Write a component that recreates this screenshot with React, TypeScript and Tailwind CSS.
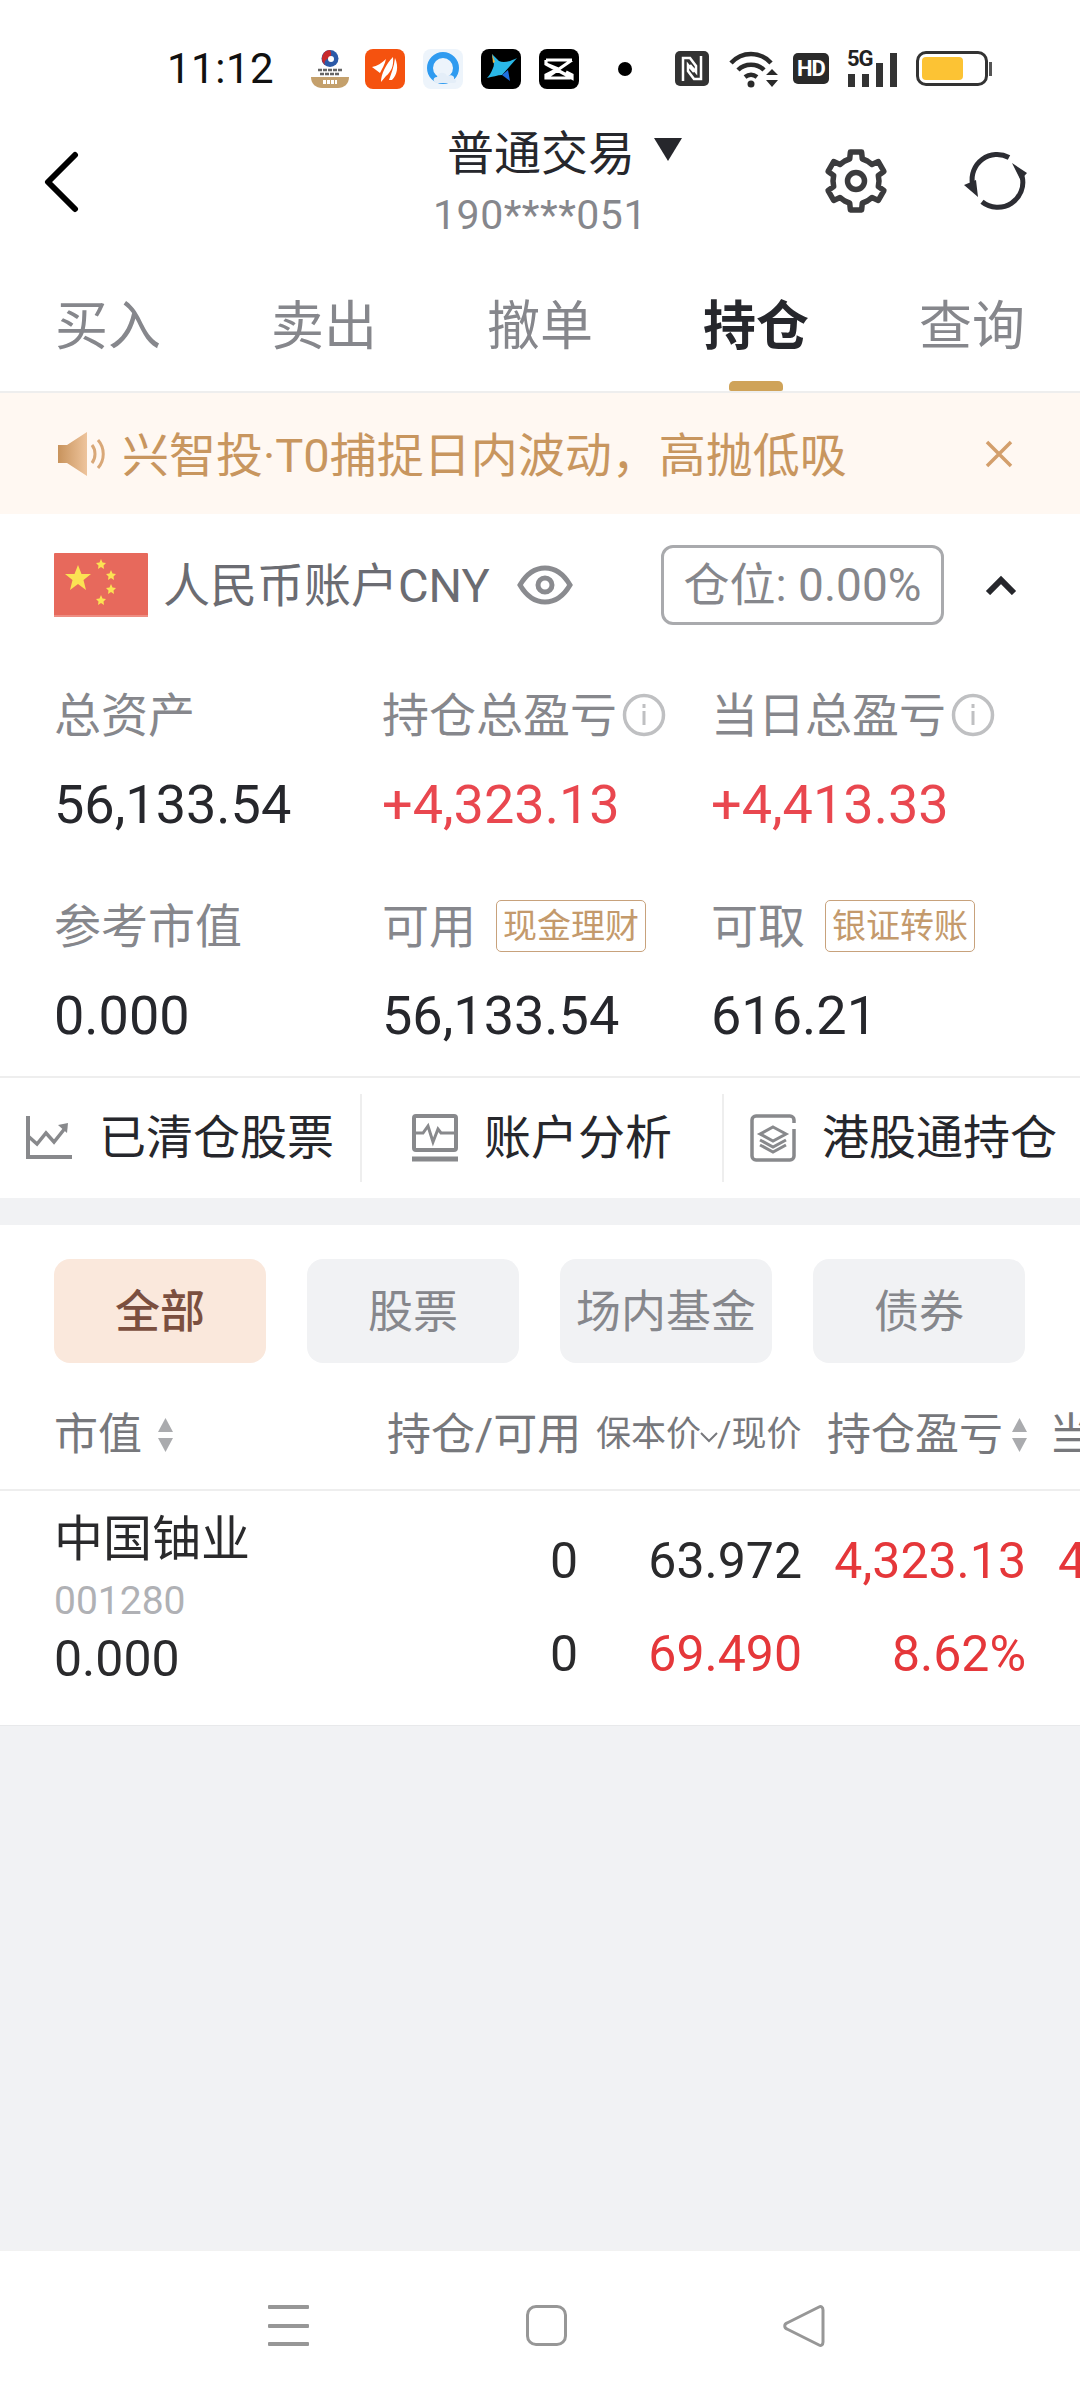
const GEAR_POINTS = Array.from({ length: 6 }, (_, i) => {
  const a = (i * 60 - 90) * (Math.PI / 180)
  const at = (r: number, d: number) => {
    const t = a + (d * Math.PI) / 180
    return `${(32 + r * Math.cos(t)).toFixed(1)},${(32 + r * Math.sin(t)).toFixed(1)}`
  }
  return [at(23, -30), at(23, -16), at(29.5, -11), at(29.5, 11), at(23, 16)].join(' ')
}).join(' ')

function XingyeLogo() {
  return (
    <svg width="38" height="40" viewBox="0 0 38 40" className="shrink-0">
      <circle cx="19" cy="9.500" r="8.500" fill="#2c5aa8" />
      <path d="M19 1a8.500 8.500 0 0 0-5 15c-2-5 3-6 5-8 2-2 1-5 0-7z" fill="#c8282c" />
      <circle cx="20" cy="10" r="3" fill="#fff" />
      <path d="M7 21h24M9 25h20" stroke="#666" strokeWidth="2.500" strokeDasharray="4 1" />
      <path d="M0 28h38c0 7-5 11-11 11H11C5 39 0 35 0 28z" fill="#c4a06c" />
      <path d="M12 33h14" stroke="#fff" strokeWidth="4" strokeDasharray="3 1" />
    </svg>
  )
}

function OrangeLogo() {
  return (
    <svg width="40" height="40" viewBox="0 0 40 40" className="shrink-0">
      <rect width="40" height="40" rx="8" fill="#f5520f" />
      <path d="M7 18c5-1 10-4 14-8-1 5-4 10-6 14z" fill="#fff" />
      <path d="M16 33c0-8 5-18 12-25 1 9-2 15-7 19z" fill="#fff" />
      <path d="M24 31c2-6 5-13 6-22 4 9 2 17-3 22z" fill="#fff" />
    </svg>
  )
}

function BrowserLogo() {
  return (
    <svg width="40" height="40" viewBox="0 0 40 40" className="shrink-0">
      <rect width="40" height="40" rx="8" fill="#edf4fb" />
      <circle cx="20" cy="19" r="13" fill="none" stroke="#2f9bf0" strokeWidth="6" />
      <path d="M14 34c-4 0-5-6 0-6 1-5 8-6 10-1 4-2 8 0 7 3 3 0 3 4 0 4z" fill="#e4eef8" />
    </svg>
  )
}

function ArrowLogo() {
  return (
    <svg width="40" height="40" viewBox="0 0 40 40" className="shrink-0">
      <rect width="40" height="40" rx="8" fill="#000" />
      <path d="M11 5c1 6 3 10 1 14-2 5-4 8-6 10 5-1 11-3 15-3l15-17c-8 4-14 5-18 3z" fill="#2ab8e8" />
      <path d="M11 5l3 8-2 1z" fill="#f0b43c" />
      <path d="M21 26l8 6-2-11z" fill="#1f6fe0" />
    </svg>
  )
}

function CapcutLogo() {
  return (
    <svg width="40" height="40" viewBox="0 0 40 40" className="shrink-0">
      <rect width="40" height="40" rx="8" fill="#000" />
      <path d="M7 11h26M7 11v4l12 5-12 6v3h21c3 0 5-1 5-1M33 11l-26 18M7 15l26 14v-3l-6-3" stroke="#fff" strokeWidth="3.2" fill="none" />
    </svg>
  )
}

function NfcIcon() {
  return (
    <svg width="34" height="35" viewBox="0 0 34 35" className="shrink-0">
      <rect width="34" height="35" rx="5" fill="#333" />
      <path d="M8 30V7h7l6 8v6l-6-7" fill="none" stroke="#fff" strokeWidth="2.500" />
      <path d="M26 5v23h-7l-6-8v-6l6 7" fill="none" stroke="#fff" strokeWidth="2.500" />
    </svg>
  )
}

function WifiIcon() {
  return (
    <svg width="50" height="40" viewBox="0 0 50 40" className="shrink-0" fill="none" stroke="#2a2a2a" strokeWidth="4.500">
      <path d="M2 14c11-12 29-12 40 0" />
      <path d="M9 21c7-7 19-7 26 0" />
      <path d="M16 28c4-3 8-3 12 0" />
      <circle cx="22" cy="35" r="3.500" fill="#2a2a2a" stroke="none" />
      <path d="M37 26h12l-6-6zM37 31h12l-6 7z" fill="#2a2a2a" stroke="none" />
    </svg>
  )
}

function BatteryIcon() {
  return (
    <div className="flex items-center shrink-0">
      <div className="w-[72px] h-[35px] rounded-[10px] border-[3px] border-[#333] p-[3px] bg-white">
        <div className="w-[41px] h-full rounded-[4px] bg-[#fcc334]" />
      </div>
      <div className="w-[3px] h-[14px] ml-[1px] bg-[#555]" />
    </div>
  )
}

function StatusBar() {
  return (
    <div className="h-[110px] shrink-0 flex items-center pt-[27px] pl-[167px] text-[#111]">
      <span className="w-[144px] text-[42px] leading-none tracking-[0.5px] shrink-0">11:12</span>
      <XingyeLogo />
      <div className="ml-[16px] flex gap-[18px]">
        <OrangeLogo />
        <BrowserLogo />
        <ArrowLogo />
        <CapcutLogo />
      </div>
      <div className="ml-[39px] w-[14px] h-[14px] rounded-full bg-black shrink-0" />
      <div className="ml-[43px]"><NfcIcon /></div>
      <div className="ml-[20px]"><WifiIcon /></div>
      <div className="ml-[14px] w-[36px] h-[31px] rounded-[5px] bg-[#2a2a2a] text-white text-[22px] font-bold leading-[31px] text-center tracking-[-1px] shrink-0">HD</div>
      <div className="ml-[18px] w-[52px] h-[36px] relative shrink-0">
        <span className="absolute left-0 -top-[3px] text-[22px] font-bold leading-[22px] tracking-[-1px] text-[#222]">5G</span>
        <div className="absolute inset-0 flex items-end gap-[7px] pl-[1px]">
          <div className="w-[7px] h-[13px] bg-[#333]" />
          <div className="w-[7px] h-[13px] bg-[#333]" />
          <div className="w-[7px] h-[24px] bg-[#333]" />
          <div className="w-[7px] h-[34px] bg-[#333]" />
        </div>
      </div>
      <div className="ml-[17px]"><BatteryIcon /></div>
    </div>
  )
}

function Header() {
  return (
    <div className="h-[140px] shrink-0 relative flex flex-col items-center">
      <svg width="36" height="62" viewBox="0 0 36 62" className="absolute left-[43px] top-[41px]" fill="none" stroke="#000" strokeWidth="6" strokeLinecap="round" strokeLinejoin="round">
        <path d="M32 4L5 31l27 27" />
      </svg>
      <div className="h-[62px] mt-[12px] flex items-center pl-[50px]">
        <span className="text-[47px] text-[#26272c] leading-none">普通交易</span>
        <svg width="30" height="24" viewBox="0 0 30 24" className="ml-[18px] mb-[8px]">
          <path d="M1 1h28L15 24z" fill="#26272c" />
        </svg>
      </div>
      <div className="text-[41px] leading-[48px] mt-[7px] text-[#86878c] tracking-[0.5px]">190****051</div>
      <svg width="64" height="64" viewBox="0 0 64 64" className="absolute left-[824px] top-[39px]" fill="none" stroke="#3b3b3d" strokeWidth="5.500" strokeLinejoin="round">
        <polygon points={GEAR_POINTS} />
        <circle cx="32" cy="32" r="8.500" />
      </svg>
      <svg width="70" height="60" viewBox="0 0 70 60" className="absolute left-[960px] top-[41px]" fill="none" stroke="#2c2d33" strokeWidth="5">
        <path d="M49 6.500A25 25 0 0 0 12.500 33" />
        <path d="M22 50.700A25 25 0 0 0 62 25" />
        <path d="M4 34l12-5 2 17zM52 12l15 10-6.500 7z" fill="#2c2d33" stroke="none" />
      </svg>
    </div>
  )
}

const TABS = ['买入', '卖出', '撤单', '持仓', '查询']

function Tabs() {
  return (
    <div className="h-[143px] shrink-0 flex border-b-2 border-[#eeeeee]">
      {TABS.map((tab) => (
        <div key={tab} className="flex-1 flex flex-col items-center relative">
          <span className={`mt-[42px] text-[53px] leading-[70px] ${tab === '持仓' ? 'text-[#26272c] font-bold' : 'text-[#86878c]'}`}>
            {tab}
          </span>
          {tab === '持仓' && <div className="absolute bottom-0 w-[54px] h-[10px] rounded-t-[5px] rounded-b-[2px] bg-[#cfa359]" />}
        </div>
      ))}
    </div>
  )
}

function Banner() {
  return (
    <div className="h-[121px] shrink-0 bg-[#fff8f2] flex items-center pl-[57px] pr-[67px]">
      <svg width="50" height="46" viewBox="0 0 50 46" className="shrink-0">
        <defs>
          <linearGradient id="spk" x1="0" x2="1">
            <stop offset="0" stopColor="#c8935c" />
            <stop offset="1" stopColor="#eec49c" />
          </linearGradient>
        </defs>
        <path d="M1 14h9L30 1v44L10 32H1z" fill="url(#spk)" />
        <path d="M35 14c4 5 4 13 0 18M41 9c7 8 7 20 0 28" fill="none" stroke="#d9a878" strokeWidth="3" />
      </svg>
      <span className="ml-[15px] mt-[3px] text-[47px] leading-none text-[#c8965f] whitespace-nowrap">兴智投·T0捕捉日内波动，高抛低吸</span>
      <svg width="28" height="28" viewBox="0 0 28 28" className="ml-auto shrink-0" fill="none" stroke="#d39f6c" strokeWidth="3.500">
        <path d="M2 2l24 24M26 2L2 26" />
      </svg>
    </div>
  )
}

function FlagIcon() {
  const small = [[47, 11], [57, 22], [57, 36], [47, 47]]
  return (
    <svg width="94" height="64" viewBox="0 0 94 64" className="shrink-0">
      <rect width="94" height="64" rx="1" fill="#e7695c" />
      <rect y="62" width="94" height="2" fill="#ee8d82" />
      <polygon points="24,12 27.500,21 37,21 29.500,27 32,37 24,31 16,37 18.500,27 11,21 20.500,21" fill="#fbe253" />
      {small.map(([x, y]) => (
        <polygon key={`${x}-${y}`} points={`${x},${y - 5} ${x + 1.5},${y - 1.500} ${x + 5},${y - 1} ${x + 2.500},${y + 1.500} ${x + 3},${y + 5} ${x},${y + 3} ${x - 3},${y + 5} ${x - 2.500},${y + 1.500} ${x - 5},${y - 1} ${x - 1.500},${y - 1.500}`} fill="#fbe253" />
      ))}
    </svg>
  )
}

function AccountRow() {
  return (
    <div className="h-[142px] shrink-0 flex items-center pl-[54px]">
      <FlagIcon />
      <span className="ml-[15px] w-[342px] text-[47px] leading-none text-[#6b6c72] whitespace-nowrap">人民币账户CNY</span>
      <svg width="56" height="40" viewBox="0 0 56 40" className="ml-[12px] shrink-0" fill="none" stroke="#8a8b8f" strokeWidth="5">
        <path d="M3 20C10 8 19 3 28 3s18 5 25 17c-7 12-16 17-25 17S10 32 3 20z" />
        <circle cx="28" cy="20" r="7" />
      </svg>
      <div className="ml-[88px] w-[283px] h-[80px] shrink-0 rounded-[12px] border-[3px] border-[#a9aaad] flex items-center justify-center text-[46px] text-[#86878c] whitespace-nowrap">
        仓位: 0.00%
      </div>
      <svg width="32" height="20" viewBox="0 0 32 20" className="ml-[41px] shrink-0" fill="none" stroke="#26272c" strokeWidth="6">
        <path d="M3 18L16 5l13 13" />
      </svg>
    </div>
  )
}

function InfoIcon() {
  return (
    <svg width="44" height="44" viewBox="0 0 44 44" className="ml-[5px] shrink-0" fill="none" stroke="#bfc0c2" strokeWidth="3.500">
      <circle cx="22" cy="22" r="19.500" />
      <path d="M22 18v14M22 11v4" strokeWidth="3" />
    </svg>
  )
}

function Chip({ label }: { label: string }) {
  return (
    <span className="ml-[20px] w-[150px] h-[52px] rounded-[5px] border border-[#c8a27c] flex items-center justify-center text-[34px] text-[#c49a6c] whitespace-nowrap">
      {label}
    </span>
  )
}

function Stat({ label, value, red, info, chip }: { label: string; value: string; red?: boolean; info?: boolean; chip?: string }) {
  return (
    <div>
      <div className="h-[60px] flex items-center text-[47px] leading-none text-[#86878c] whitespace-nowrap">
        {label}
        {info && <InfoIcon />}
        {chip && <Chip label={chip} />}
      </div>
      <div className={`mt-[30px] h-[60px] flex items-center text-[54px] leading-none whitespace-nowrap ${red ? 'text-[#e9474f]' : 'text-[#26272c]'}`}>
        {value}
      </div>
    </div>
  )
}

function Stats() {
  return (
    <div className="h-[422px] shrink-0 pt-[29px] pl-[54px] border-b-2 border-[#eeeeee] grid grid-cols-[328px_329px_1fr] grid-rows-[211px_1fr]">
      <Stat label="总资产" value="56,133.54" />
      <Stat label="持仓总盈亏" value="+4,323.13" red info />
      <Stat label="当日总盈亏" value="+4,413.33" red info />
      <Stat label="参考市值" value="0.000" />
      <Stat label="可用" value="56,133.54" chip="现金理财" />
      <Stat label="可取" value="616.21" chip="银证转账" />
    </div>
  )
}

function ActionRow() {
  return (
    <div className="h-[120px] shrink-0 flex items-center text-[47px] text-[#26272c] whitespace-nowrap">
      <div className="w-[362px] h-[88px] flex items-center pl-[26px] border-r-2 border-[#eeeeee]">
        <svg width="46" height="46" viewBox="0 0 46 46" fill="none" stroke="#88898c" strokeWidth="3.500" className="shrink-0">
          <path d="M2 1v41h44" strokeWidth="4" />
          <path d="M2 21l9 8 9-11 8 9 12-15" />
          <path d="M32 10l10-2-1 10z" fill="#88898c" stroke="none" />
        </svg>
        <span className="ml-[27px]">已清仓股票</span>
      </div>
      <div className="w-[362px] h-[88px] flex items-center pl-[50px] border-r-2 border-[#eeeeee]">
        <svg width="46" height="48" viewBox="0 0 46 48" fill="none" stroke="#88898c" strokeWidth="4" className="shrink-0">
          <rect x="2" y="2" width="42" height="34" rx="2" />
          <path d="M2 19h9l5-7 5 16 5-13 3 4h14" strokeWidth="3" />
          <path d="M0 45h46" strokeWidth="5" />
        </svg>
        <span className="ml-[26px]">账户分析</span>
      </div>
      <div className="flex-1 h-[88px] flex items-center pl-[26px]">
        <svg width="46" height="48" viewBox="0 0 46 48" fill="none" stroke="#88898c" strokeWidth="3.500" className="shrink-0">
          <path d="M44 9V6a4 4 0 0 0-4-4H6a4 4 0 0 0-4 4v36a4 4 0 0 0 4 4h34a4 4 0 0 0 4-4V15" />
          <path d="M23 13l13 7-13 7-13-7z" strokeWidth="3" />
          <path d="M10 26l13 7 13-7M10 31l13 7 13-7" strokeWidth="3" />
        </svg>
        <span className="ml-[26px]">港股通持仓</span>
      </div>
    </div>
  )
}

const FILTERS = ['全部', '股票', '场内基金', '债券']

function Filters() {
  return (
    <div className="pt-[34px] px-[54px] flex gap-[41px]">
      {FILTERS.map((f, i) => (
        <div
          key={f}
          className={`w-[212px] h-[104px] pt-[4px] rounded-[16px] flex items-center justify-center text-[45px] ${i === 0 ? 'bg-[#fae8dc] text-[#7b4f3f] font-medium' : 'bg-[#f1f2f4] text-[#86878c]'}`}
        >
          {f}
        </div>
      ))}
    </div>
  )
}

function SortArrows() {
  return (
    <svg width="17" height="36" viewBox="0 0 17 36" className="shrink-0">
      <path d="M8.500 1L16 15H1z" fill="#aaabae" />
      <path d="M8.500 35L16 21H1z" fill="#aaabae" />
    </svg>
  )
}

function TableHeader() {
  return (
    <div className="h-[128px] shrink-0 pt-[18px] flex items-center text-[44px] text-[#77787c] whitespace-nowrap border-b-2 border-[#eeeeee] overflow-hidden">
      <div className="w-[387px] shrink-0 pl-[54px] flex items-center gap-[15px]">
        市值
        <SortArrows />
      </div>
      <div className="w-[209px] shrink-0">持仓/可用</div>
      <div className="w-[231px] shrink-0 flex items-center text-[35px]">
        保本价
        <svg width="18" height="12" viewBox="0 0 18 12" className="-mx-[1px] mt-[4px] shrink-0" fill="none" stroke="#77787c" strokeWidth="2">
          <path d="M1 2l8 8 8-8" />
        </svg>
        /现价
      </div>
      <div className="w-[222px] shrink-0 flex items-center gap-[8px]">
        持仓盈亏
        <SortArrows />
      </div>
      <div className="shrink-0">当日盈亏</div>
    </div>
  )
}

function TableRow() {
  const red = 'text-[#e5373a]'
  return (
    <div className="h-[235px] shrink-0 flex whitespace-nowrap text-[50px] text-[#2a2a2c] border-b border-[#e8e9eb] overflow-hidden">
      <div className="w-[388px] shrink-0 pl-[54px] pt-[18px]">
        <div className="h-[62px] leading-[62px] text-[49px]">中国铀业</div>
        <div className="h-[50px] leading-[50px] text-[39px] text-[#b0b1b5] mt-[5px]">001280</div>
        <div className="h-[60px] leading-[60px] mt-[3px]">0.000</div>
      </div>
      <div className="flex shrink-0 flex-col pt-[40px] gap-[33px]">
        <div className="flex leading-[60px]">
          <div className="w-[190px] text-right">0</div>
          <div className="w-[224px] text-right">63.972</div>
          <div className={`w-[224px] text-right ${red}`}>4,323.13</div>
          <div className={`ml-[32px] ${red}`}>4,413.33</div>
        </div>
        <div className="flex leading-[60px]">
          <div className="w-[190px] text-right">0</div>
          <div className={`w-[224px] text-right ${red}`}>69.490</div>
          <div className={`w-[224px] text-right ${red}`}>8.62%</div>
        </div>
      </div>
    </div>
  )
}

function NavBar() {
  return (
    <div className="h-[150px] shrink-0 bg-white relative border-t border-[#f2f2f2] flex items-start pt-[54px] pl-[268px]">
      <div className="w-[41px] h-[41px] flex flex-col justify-between shrink-0">
        <div className="h-[4px] bg-[#979797] rounded-[1px]" />
        <div className="h-[4px] bg-[#979797] rounded-[1px]" />
        <div className="h-[4px] bg-[#979797] rounded-[1px]" />
      </div>
      <div className="ml-[217px] w-[41px] h-[41px] rounded-[10px] border-[3px] border-[#979797] shrink-0" />
      <svg width="42" height="42" viewBox="0 0 42 42" className="ml-[216px] shrink-0" fill="none" stroke="#979797" strokeWidth="3" strokeLinejoin="round">
        <path d="M36 2c2-1 4 0 4 3v32c0 3-2 4-4 3L4 24c-3-1-3-5 0-6z" />
      </svg>
    </div>
  )
}

export default function App() {
  return (
    <div className="w-[1080px] h-[2400px] overflow-hidden flex flex-col bg-white [font-family:Roboto,'Noto_Sans_CJK_SC',sans-serif]">
      <StatusBar />
      <Header />
      <Tabs />
      <Banner />
      <AccountRow />
      <Stats />
      <ActionRow />
      <div className="h-[27px] shrink-0 bg-[#f1f2f4]" />
      <Filters />
      <TableHeader />
      <TableRow />
      <div className="flex-1 bg-[#f1f2f4]" />
      <NavBar />
    </div>
  )
}
